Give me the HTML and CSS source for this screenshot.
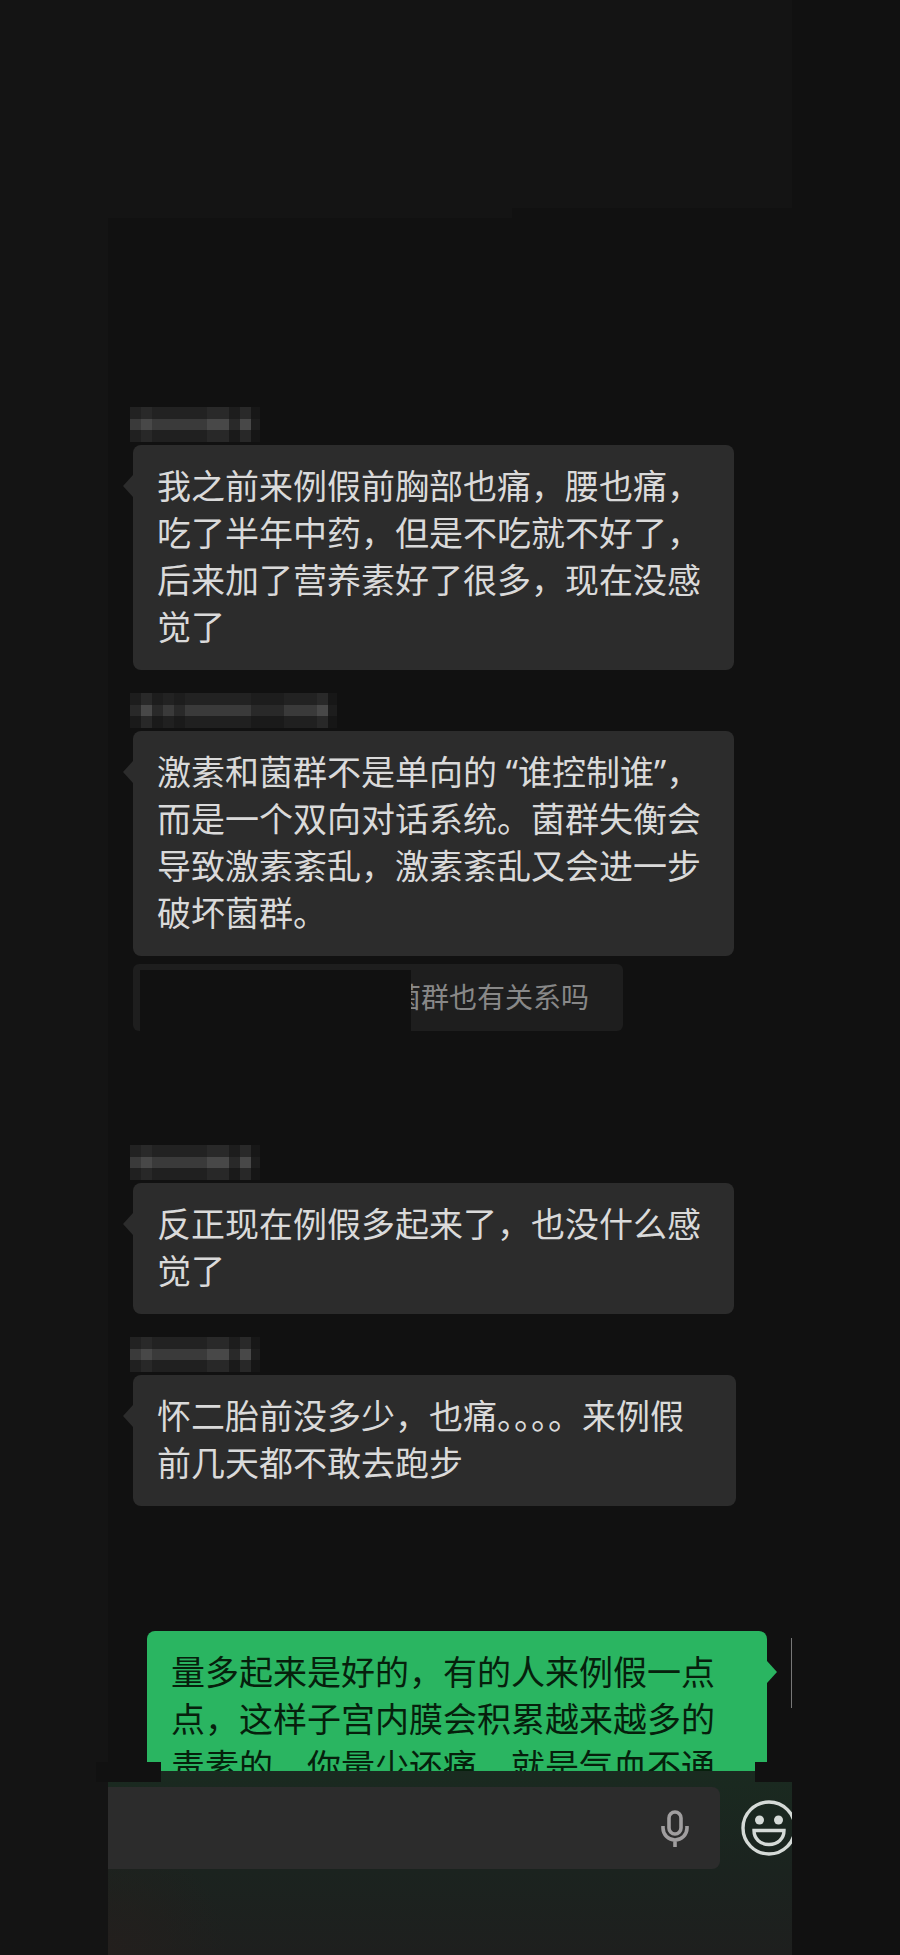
FILE: index.html
```html
<!DOCTYPE html>
<html lang="zh-CN">
<head>
    <meta charset="UTF-8">
    <meta name="viewport" content="width=device-width, initial-scale=1.0">
    <title>聊天</title>
    <link rel="stylesheet" href="styles.css">
</head>
<body>

<div class="phone">
    <header class="topbar"></header>

    <main class="chat">
        <!-- Mensajes recibidos -->
        <section class="message">
            <div class="name"><i></i><i class="hi"></i><i></i><i></i><i></i><i></i><i></i><i class="hi"></i><i class="hi"></i><i class="lo"></i><i class="hi"></i><i class="end"></i></div>
            <p class="bubble">我之前来例假前胸部也痛，腰也痛，吃了半年中药，但是不吃就不好了，后来加了营养素好了很多，现在没感觉了</p>
        </section>

        <section class="message quoted">
            <div class="name"><i class="lo"></i><i class="hi"></i><i class="lo"></i><i></i><i class="lo"></i><i></i><i></i><i></i><i></i><i></i><i></i><i class="lo"></i><i class="lo"></i><i class="lo"></i><i></i><i></i><i></i><i class="hi"></i><i class="end"></i></div>
            <p class="bubble">激素和菌群不是单向的 “谁控制谁”，而是一个双向对话系统。菌群失衡会导致激素紊乱，激素紊乱又会进一步破坏菌群。</p>
            <blockquote class="quote">菌群也有关系吗</blockquote>
        </section>

        <section class="message">
            <div class="name"><i></i><i class="hi"></i><i></i><i></i><i></i><i></i><i></i><i class="hi"></i><i class="hi"></i><i class="lo"></i><i class="hi"></i><i class="end"></i></div>
            <p class="bubble">反正现在例假多起来了，也没什么感觉了</p>
        </section>

        <section class="message">
            <div class="name"><i></i><i class="hi"></i><i></i><i></i><i></i><i></i><i></i><i class="hi"></i><i class="hi"></i><i class="lo"></i><i class="hi"></i><i class="end"></i></div>
            <p class="bubble wide">怀二胎前没多少，也痛。。。。来例假前几天都不敢去跑步</p>
        </section>

        <!-- Mensaje enviado -->
        <section class="message sent">
            <p class="bubble green">量多起来是好的，有的人来例假一点点，这样子宫内膜会积累越来越多的毒素的，你量少还痛，就是气血不通</p>
            <span class="avatar"></span>
        </section>
    </main>

    <footer class="composer">
        <div class="field">
            <input class="text" type="text" aria-label="输入消息">
            <button class="mic" type="button" aria-label="语音">
                <svg width="30" height="40" viewBox="0 0 30 40" fill="none" stroke="#a09e9f" stroke-width="3.6">
                    <rect x="9" y="4" width="12" height="22" rx="6"/>
                    <path d="M3 18v2a12 12 0 0 0 24 0v-2M15 32V39"/>
                </svg>
            </button>
        </div>
        <button class="emoji" type="button" aria-label="表情">
            <svg width="56" height="56" viewBox="0 0 56 56" fill="none" stroke="#d5dad7" stroke-width="3.4">
                <circle cx="28" cy="28" r="26"/>
                <circle cx="18.5" cy="20" r="4.5" fill="#d5dad7" stroke="none"/>
                <circle cx="37.5" cy="20" r="4.5" fill="#d5dad7" stroke="none"/>
                <path d="M13 30.500h30c0 8-6 14-15 14s-15-6-15-14z"/>
            </svg>
        </button>
    </footer>
</div>

</body>
</html>
```
FILE: styles.css
```css
* {
    box-sizing: border-box;
}
body {
    margin: 0;
    background-color: #111111;
    font-family: "Noto Sans", "Noto Sans CJK SC", sans-serif;
}
.phone {
    width: 88%;
    min-height: 100vh;
    background-color: #141414;
    display: flex;
    flex-direction: column;
}
.topbar {
    display: flex;
    align-items: flex-end;
    justify-content: flex-end;
    height: 218px;
}
.topbar::after {
    content: "";
    width: 280px;
    height: 10px;
    background-color: #111111;
}
.chat {
    flex: 1;
    margin-left: 108px;
    padding: 189px 0 0 25px;
    background-color: #111111;
    position: relative;
}
.message {
    margin-bottom: 23px;
}
.name {
    display: flex;
    width: max-content;
    height: 35px;
    margin: 0 0 3px -3px;
}
.name i {
    width: 11px;
    background: linear-gradient(#222222 34%, #3a3a3a 34%, #3a3a3a 67%, #202020 67%);
}
.name .hi {
    background: linear-gradient(#292929 34%, #484848 34%, #484848 67%, #282828 67%);
}
.name .lo {
    background: linear-gradient(#1d1d1d 34%, #292929 34%, #292929 67%, #1a1a1a 67%);
}
.name .end {
    width: 9px;
    background: linear-gradient(#171717 34%, #1d1d1d 34%, #1d1d1d 67%, #161616 67%);
}
.bubble {
    position: relative;
    width: 601px;
    max-width: 100%;
    margin: 0;
    padding: 18px 24px 19px;
    border-radius: 8px;
    background-color: #2c2c2c;
    color: #dadada;
    font-size: 34px;
    line-height: 47px;
}
.bubble::before {
    content: "";
    position: absolute;
    left: -10px;
    top: 30px;
    width: 10px;
    height: 22px;
    background-color: #2c2c2c;
    clip-path: polygon(100% 0, 0 50%, 100% 100%);
}
.wide {
    width: 603px;
}
.quoted {
    margin-bottom: 114px;
}
.quote {
    position: relative;
    width: 490px;
    margin: 8px 0 0;
    padding: 13px 34px 14px;
    border-radius: 6px;
    background-color: #1e1e1e;
    color: #888888;
    font-size: 28px;
    line-height: 40px;
    text-align: right;
}
/* tapa el nombre citado */
.quote::before {
    content: "";
    position: absolute;
    left: 7px;
    top: 6px;
    bottom: 0;
    width: 271px;
    background-color: #111111;
}
.sent {
    display: flex;
    justify-content: space-between;
    height: 140px;
    margin: 125px 0 0 14px;
    overflow: hidden;
}
.green {
    width: 620px;
    padding-right: 48px;
    background-color: #2ab561;
    color: #06200c;
}
.green::before {
    left: auto;
    right: -10px;
    background-color: #2ab561;
    clip-path: polygon(0 0, 100% 50%, 0 100%);
}
.avatar {
    width: 1px;
    height: 70px;
    margin-top: 7px;
    background-color: #777777;
}
.chat::before,
.chat::after {
    content: "";
    position: absolute;
    z-index: 1;
    bottom: -11px;
    height: 20px;
    background-color: #111111;
}
.chat::before {
    left: -12px;
    width: 65px;
}
.chat::after {
    right: 0;
    width: 37px;
}
.composer {
    display: flex;
    align-items: flex-start;
    height: 184px;
    margin-left: 108px;
    padding-top: 16px;
    background: radial-gradient(circle at 0 100%, #231f1d, transparent 120px), linear-gradient(#1a2a20, #1b231f 55%, #1e1f1e);
    overflow: hidden;
}
.field {
    display: flex;
    flex: 1;
    align-items: center;
    height: 82px;
    padding-right: 30px;
    border-radius: 0 8px 8px 0;
    background-color: #2c2c2c;
}
.text {
    flex: 1;
    min-width: 0;
    height: 82px;
    border: none;
    background: none;
    color: #dadada;
    font-size: 34px;
}
.mic,
.emoji {
    display: flex;
    padding: 0;
    border: none;
    background: none;
    cursor: pointer;
}
.emoji {
    flex: none;
    width: 51px;
    margin: 13px 0 0 21px;
    overflow: hidden;
}
.emoji svg {
    flex: none;
}
```
